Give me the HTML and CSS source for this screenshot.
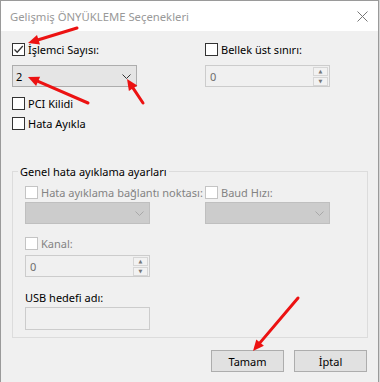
FILE: index.html
```html
<!DOCTYPE html>
<html lang="tr">

<head>
    <meta charset="UTF-8">
    <title>Gelişmiş ÖNYÜKLEME Seçenekleri</title>
    <link rel="stylesheet" href="styles.css">
</head>

<body>
    <div class="pencere">
        <div class="baslik">
            <span class="baslik-yazi">Gelişmiş ÖNYÜKLEME Seçenekleri</span>
            <svg class="kapat" width="11" height="11" viewBox="0 0 11 11">
                <path d="M0.5 0.5 L10.5 10.5 M10.5 0.5 L0.5 10.5" stroke="#777" stroke-width="1" fill="none" />
            </svg>
        </div>

        <div class="icerik">
            <div class="ust">
                <div class="sol">
                    <label class="secim">
                        <span class="kutu">
                            <svg width="11" height="11" viewBox="0 0 11 11">
                                <path d="M1.5 5.5 L4.2 8.3 L9.8 2" stroke="#333" stroke-width="1.3" fill="none" />
                            </svg>
                        </span>
                        İşlemci Sayısı:
                    </label>
                    <div class="acilir">
                        <span>2</span>
                        <svg width="9" height="5" viewBox="0 0 9 5">
                            <path d="M0.5 0.5 L4.5 4.5 L8.5 0.5" stroke="#333" stroke-width="1" fill="none" />
                        </svg>
                    </div>
                    <label class="secim pci"><span class="kutu"></span>PCI Kilidi</label>
                    <label class="secim hata"><span class="kutu"></span>Hata Ayıkla</label>
                </div>
                <div class="sag">
                    <label class="secim"><span class="kutu"></span>Bellek üst sınırı:</label>
                    <div class="sayac">
                        <span>0</span>
                        <div class="oklar">
                            <span>▲</span>
                            <span>▼</span>
                        </div>
                    </div>
                </div>
            </div>

            <fieldset class="grup">
                <legend>Genel hata ayıklama ayarları</legend>
                <div class="grup-ust">
                    <div>
                        <label class="secim pasif"><span class="kutu"></span>Hata ayıklama bağlantı noktası:</label>
                        <div class="acilir kapali">
                            <span></span>
                            <svg width="9" height="5" viewBox="0 0 9 5">
                                <path d="M0.5 0.5 L4.5 4.5 L8.5 0.5" stroke="#a8a8a8" stroke-width="1" fill="none" />
                            </svg>
                        </div>
                    </div>
                    <div>
                        <label class="secim pasif"><span class="kutu"></span>Baud Hızı:</label>
                        <div class="acilir kapali">
                            <span></span>
                            <svg width="9" height="5" viewBox="0 0 9 5">
                                <path d="M0.5 0.5 L4.5 4.5 L8.5 0.5" stroke="#a8a8a8" stroke-width="1" fill="none" />
                            </svg>
                        </div>
                    </div>
                </div>
                <label class="secim pasif kanal"><span class="kutu"></span>Kanal:</label>
                <div class="sayac kanal-sayac">
                    <span>0</span>
                    <div class="oklar">
                        <span>▲</span>
                        <span>▼</span>
                    </div>
                </div>
                <div class="usb-etiket">USB hedefi adı:</div>
                <div class="metin-kutusu"></div>
            </fieldset>

            <div class="dugmeler">
                <button class="dugme">Tamam</button>
                <button class="dugme">İptal</button>
            </div>
        </div>

        <!-- kırmızı oklar -->
        <svg class="isaretler" width="380" height="382" viewBox="0 0 380 382">
            <g stroke="#ec1212" stroke-width="3" stroke-linecap="round" fill="none">
                <path d="M77 28 L38.5 39.8" />
                <path d="M88 103 L38.1 81.4" />
                <path d="M143 103 L133.1 88.2" />
                <path d="M298 298 L260.1 342.6" />
            </g>
            <g fill="#ec1212">
                <polygon points="28,43 37,35 40,44.6" />
                <polygon points="28,77 40.1,76.8 36.1,86" />
                <polygon points="127,79 137.3,85.4 128.9,91" />
                <polygon points="253,351 256.3,339.4 263.9,345.8" />
            </g>
        </svg>
    </div>
</body>

</html>
```

FILE: styles.css
```css
* {
    box-sizing: border-box;
    margin: 0;
}

body {
    background-color: #d6d6d6;
    font-family: "Noto Sans", "DejaVu Sans", sans-serif;
    font-size: 11px;
    color: #000;
}

.pencere {
    position: relative;
    width: 379px;
    height: 382px;
    background-color: #f0f0f0;
    border-top: 1px solid #9a9a9a;
    border-left: 1px solid #9a9a9a;
    border-right: 1px solid #9a9a9a;
    overflow: hidden;
}

.baslik {
    height: 30px;
    background-color: #fff;
    display: flex;
    align-items: center;
    justify-content: space-between;
    padding-left: 9px;
    padding-right: 10px;
}

.baslik-yazi {
    color: #999;
    font-size: 11.3px;
    line-height: 15px;
}

.icerik {
    padding-top: 11px;
    padding-left: 11px;
}

.ust {
    display: grid;
    grid-template-columns: 193px 1fr;
}

.secim {
    display: flex;
    align-items: center;
    height: 15px;
    line-height: 15px;
    white-space: nowrap;
}

.kutu {
    width: 13px;
    height: 13px;
    border: 1px solid #333;
    background-color: #fff;
    margin-right: 3px;
    display: flex;
    align-items: center;
    justify-content: center;
    flex: none;
}

.pasif {
    color: #838383;
}

.pasif .kutu {
    border-color: #c4c4c4;
}

.acilir {
    width: 125px;
    height: 22px;
    margin-top: 8px;
    background-color: #e5e5e5;
    border: 1px solid #adadad;
    display: flex;
    align-items: center;
    justify-content: space-between;
    padding-left: 3px;
    padding-right: 5px;
}

.acilir.kapali {
    margin-top: 2px;
    background-color: #cccccc;
    border-color: #bfbfbf;
}

.pci {
    margin-top: 9px;
}

.hata {
    margin-top: 5px;
}

.sayac {
    width: 125px;
    height: 22px;
    margin-top: 8px;
    background-color: #f0f0f0;
    border: 1px solid #cccccc;
    display: flex;
    align-items: center;
    justify-content: space-between;
    padding-left: 4px;
    color: #6d6d6d;
}

.oklar {
    width: 16px;
    height: 20px;
    display: flex;
    flex-direction: column;
    gap: 1px;
    padding: 1px 1px 1px 0;
}

.oklar span {
    flex: 1;
    border: 1px solid #d6d6d6;
    background-color: #f2f2f2;
    font-size: 5px;
    line-height: 7px;
    text-align: center;
    color: #777;
}

.grup {
    width: 356px;
    margin-top: 33px;
    border: 1px solid #dcdcdc;
    padding: 6px 12px 7px 12px;
    min-width: 0;
}

.grup legend {
    margin-left: -7px;
    padding: 0 2px;
    line-height: 15px;
}

.grup-ust {
    display: grid;
    grid-template-columns: 180px 1fr;
}

.kanal {
    margin-top: 12px;
}

.kanal-sayac {
    margin-top: 4px;
}

.usb-etiket {
    margin-top: 13px;
    line-height: 15px;
}

.metin-kutusu {
    width: 125px;
    height: 23px;
    margin-top: 2px;
    background-color: #f0f0f0;
    border: 1px solid #cccccc;
}

.dugmeler {
    width: 355px;
    margin-top: 12px;
    display: flex;
    justify-content: flex-end;
    gap: 10px;
}

.dugme {
    width: 73px;
    height: 22px;
    background-color: #e1e1e1;
    border: 1px solid #adadad;
    font-family: inherit;
    font-size: 11px;
    color: #000;
    padding: 0;
}

.isaretler {
    position: absolute;
    top: -1px;
    left: -1px;
    pointer-events: none;
}
```
